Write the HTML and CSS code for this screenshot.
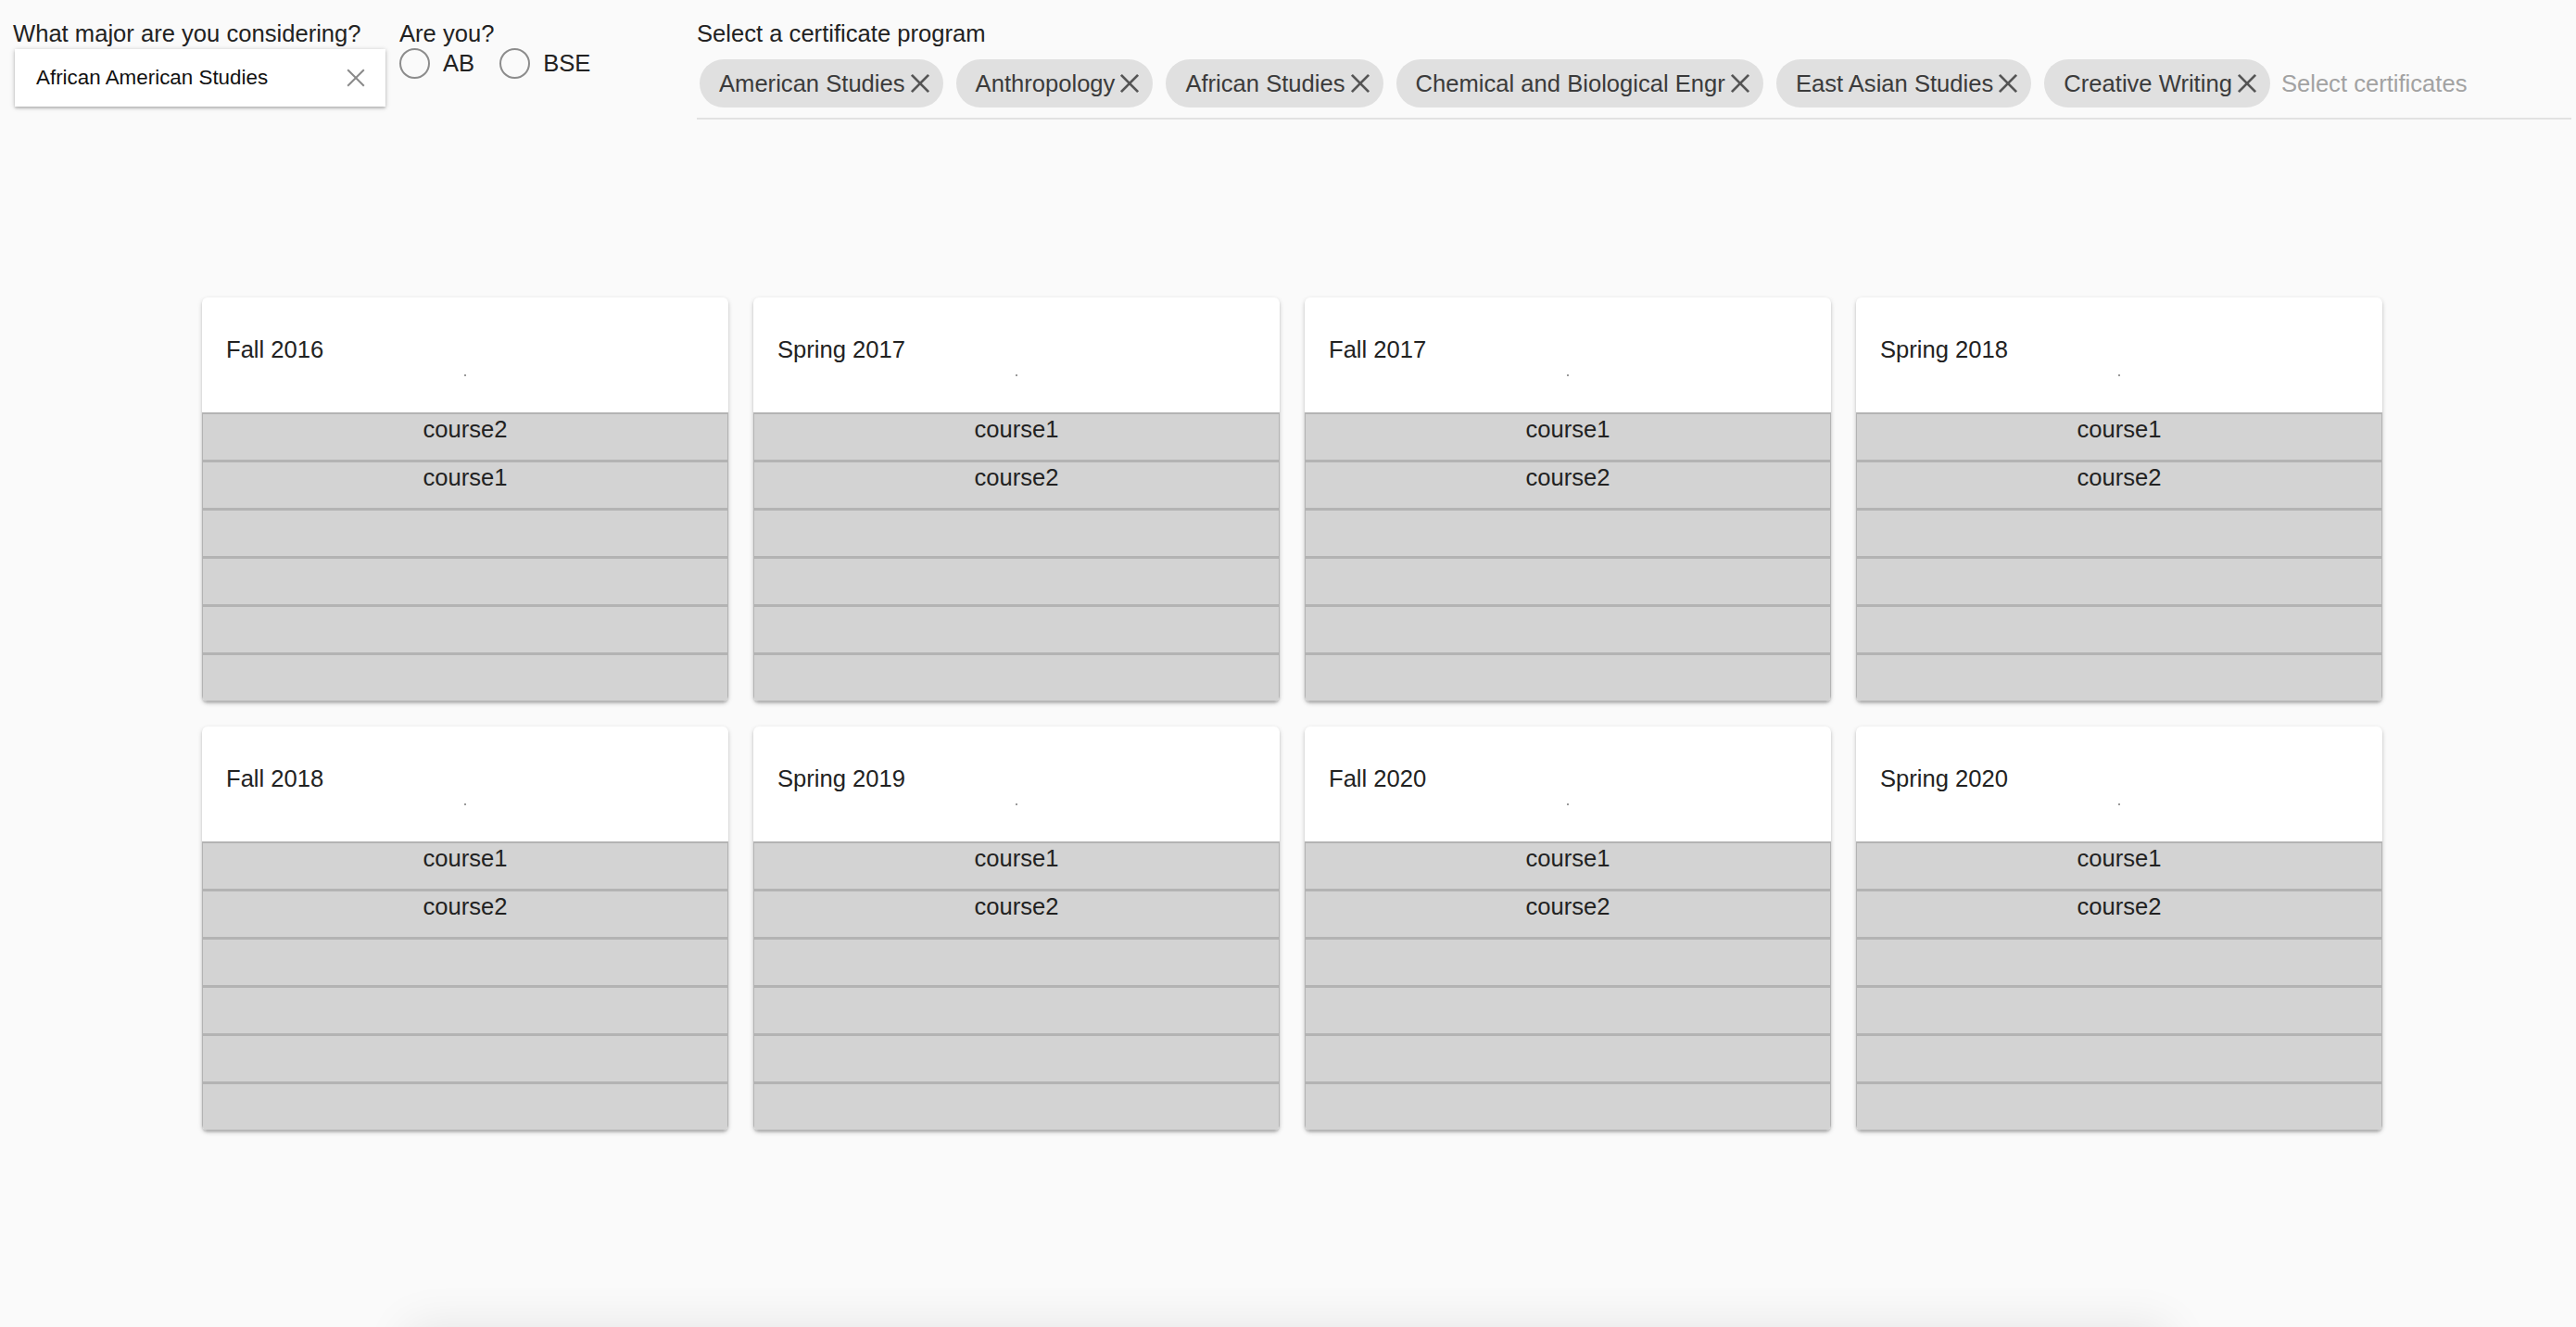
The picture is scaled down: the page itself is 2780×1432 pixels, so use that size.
FILE: index.html
```html
<!DOCTYPE html>
<html lang="en">
<head>
<meta charset="UTF-8">
<title>Course Planner</title>
<link rel="stylesheet" href="styles.css">
</head>
<body>
<div class="toolbar">
  <div class="major">
    <div class="label">What major are you considering?</div>
    <div class="select-box">
      <span>African American Studies</span>
      <svg class="clear" viewBox="0 0 20 20"><line x1="2" y1="2" x2="18" y2="18"/><line x1="18" y1="2" x2="2" y2="18"/></svg>
    </div>
  </div>
  <div class="degree">
    <div class="label">Are you?</div>
    <div class="radios">
      <span class="radio"></span><span class="radio-label">AB</span>
      <span class="radio"></span><span class="radio-label">BSE</span>
    </div>
  </div>
  <div class="certs">
    <div class="label">Select a certificate program</div>
    <div class="chips">
      <!-- chips are filled in below -->
      <span class="placeholder">Select certificates</span>
    </div>
  </div>
</div>

<div class="semesters"></div>

<div class="bottom-panel"></div>

<script>
document.addEventListener('DOMContentLoaded', function () {
  const certs = ['American Studies', 'Anthropology', 'African Studies', 'Chemical and Biological Engr', 'East Asian Studies', 'Creative Writing'];
  const chips = document.querySelector('.chips');
  const placeholder = chips.querySelector('.placeholder');
  certs.forEach(function (name) {
    const chip = document.createElement('span');
    chip.className = 'chip';
    chip.innerHTML = `${name}<svg class="chip-x" viewBox="0 0 20 20"><line x1="3" y1="3" x2="17" y2="17"/><line x1="17" y1="3" x2="3" y2="17"/></svg>`;
    chips.insertBefore(chip, placeholder);
  });

  const semesters = [
    ['Fall 2016', ['course2', 'course1']],
    ['Spring 2017', ['course1', 'course2']],
    ['Fall 2017', ['course1', 'course2']],
    ['Spring 2018', ['course1', 'course2']],
    ['Fall 2018', ['course1', 'course2']],
    ['Spring 2019', ['course1', 'course2']],
    ['Fall 2020', ['course1', 'course2']],
    ['Spring 2020', ['course1', 'course2']]
  ];
  const grid = document.querySelector('.semesters');
  semesters.forEach(function (s) {
    let rows = '';
    for (let i = 0; i < 6; i++) {
      rows += `<div class="slot">${s[1][i] || ''}</div>`;
    }
    grid.innerHTML += `
      <div class="card">
        <div class="card-header">
          <div class="card-title">${s[0]}</div>
          <div class="card-dot"></div>
        </div>
        ${rows}
      </div>`;
  });
});
</script>
</body>
</html>
```

FILE: styles.css
```css
body {
  margin: 0;
  background: #fafafa;
  font-family: "Liberation Sans", Arial, sans-serif;
  color: #222;
  overflow: hidden;
}

.label {
  font-size: 25.6px;
  line-height: 29px;
  color: #222;
}

/* top bar */
.toolbar {
  display: flex;
  padding: 22px 5px 0 14px;
}

.major {
  width: 402px;
}

.select-box {
  margin: 2px 0 0 2px;
  height: 62px;
  background: white;
  box-shadow: 0 1px 5px rgba(0, 0, 0, 0.25), 0 2px 2px rgba(0, 0, 0, 0.12);
  display: flex;
  align-items: center;
  padding: 0 21px 0 23px;
  box-sizing: border-box;
  font-size: 22.4px;
  color: #111;
}

.select-box span {
  flex: 1;
}

.clear {
  width: 22px;
  height: 22px;
  stroke: #8a8a8a;
  stroke-width: 1.8;
}

.degree {
  margin-left: 15px;
  width: 321px;
}

.radios {
  display: flex;
  align-items: center;
  margin-top: 1px;
  height: 32px;
}

.radio {
  width: 29px;
  height: 29px;
  border: 2px solid #8c8c8c;
  border-radius: 50%;
  margin-right: 14px;
}

.radio-label {
  font-size: 25.6px;
  margin-right: 27px;
}

.certs {
  flex: 1;
}

.chips {
  display: flex;
  align-items: center;
  margin-top: 13px;
  padding: 0 0 11px 3px;
  border-bottom: 2px solid #e2e2e2;
}

.chip {
  display: flex;
  align-items: center;
  height: 52px;
  padding: 0 12px 0 21px;
  margin-right: 14px;
  border-radius: 26px;
  background: #e0e0e0;
  font-size: 25.6px;
  color: #3b3b3b;
  white-space: nowrap;
}

.chip-x {
  width: 26px;
  height: 26px;
  margin-left: 3px;
  stroke: #555;
  stroke-width: 2.1;
}

.placeholder {
  margin-left: -2px;
  font-size: 25.6px;
  color: #a2a2a2;
}

/* semester cards */
.semesters {
  display: grid;
  grid-template-columns: repeat(4, 568px);
  gap: 27px;
  padding: 192px 0 0 218px;
}

.card {
  background: white;
  border-radius: 6px;
  overflow: hidden;
  box-shadow: 0 2px 5px rgba(0, 0, 0, 0.2), 0 2px 2px rgba(0, 0, 0, 0.12);
}

.card-header {
  height: 124px;
  box-sizing: border-box;
  padding: 42px 26px 0;
}

.card-title {
  font-size: 25.6px;
  line-height: 29px;
}

.card-dot {
  width: 2px;
  height: 2px;
  margin: 12px auto 0;
  background: #999;
}

.slot {
  height: 52px;
  box-sizing: border-box;
  padding-top: 3px;
  background: #d3d3d3;
  border: 1px solid #b3b3b3;
  border-top-width: 2px;
  text-align: center;
  font-size: 25.6px;
  line-height: 27px;
  color: #222;
}

.bottom-panel {
  margin: 212px auto 0;
  width: 1900px;
  height: 200px;
  background: #fafafa;
  box-shadow: 0 0 48px rgba(0, 0, 0, 0.09);
}
```
